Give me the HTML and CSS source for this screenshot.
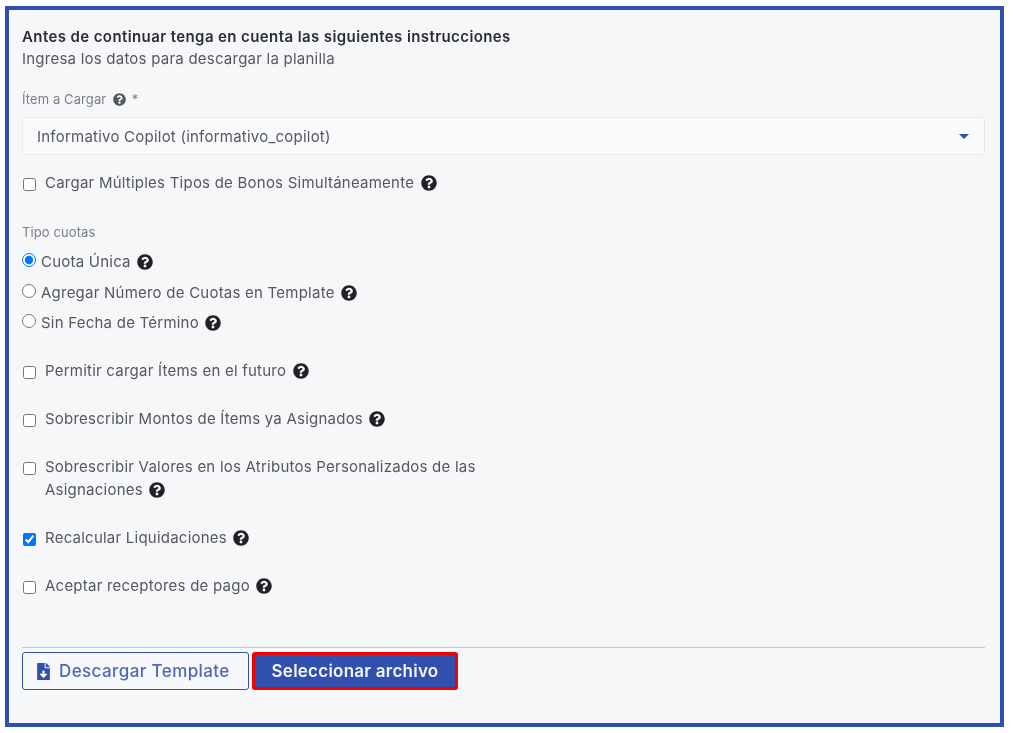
FILE: index.html
```
<!DOCTYPE html>
<html lang="es">
<head>
<meta charset="utf-8">
<title>Cargar ítems</title>
<link rel="stylesheet" href="styles.css">
</head>
<body>
<svg class="defs" width="0" height="0" aria-hidden="true">
  <symbol id="help" viewBox="0 0 512 512"><path d="M504 256c0 136.997-111.043 248-248 248S8 392.997 8 256C8 119.083 119.043 8 256 8s248 111.083 248 248zM262.655 90c-54.497 0-89.255 22.957-116.549 63.758-3.536 5.286-2.353 12.415 2.715 16.258l34.699 26.31c5.205 3.947 12.621 3.008 16.665-2.122 17.864-22.658 30.113-35.797 57.303-35.797 20.429 0 45.698 13.148 45.698 32.958 0 14.976-12.363 22.667-32.534 33.976C247.128 238.528 216 254.941 216 296v4c0 6.627 5.373 12 12 12h56c6.627 0 12-5.373 12-12v-1.333c0-28.462 83.186-29.647 83.186-106.667 0-58.002-60.165-105-116.531-105zM256 338c-25.365 0-46 20.635-46 46 0 25.364 20.635 46 46 46s46-20.636 46-46c0-25.365-20.635-46-46-46z"/></symbol>
  <symbol id="file-down" viewBox="0 0 384 512"><path d="M224 136V0H24C10.700 0 0 10.700 0 24v464c0 13.300 10.700 24 24 24h336c13.300 0 24-10.700 24-24V160H248c-13.200 0-24-10.800-24-24zm76.450 211.360l-96.420 95.700c-6.650 6.610-17.390 6.610-24.040 0l-96.420-95.700C73.420 337.290 80.540 320 94.820 320H160v-80c0-8.840 7.160-16 16-16h32c8.840 0 16 7.160 16 16v80h65.180c14.280 0 21.400 17.290 11.270 27.360zM377 105L279.100 7c-4.500-4.500-10.600-7-17-7H256v128h128v-6.100c0-6.300-2.500-12.400-7-16.900z"/></symbol>
</svg>
<main class="frame">
  <header class="intro">
    <h1 class="title">Antes de continuar tenga en cuenta las siguientes instrucciones</h1>
    <p class="subtitle">Ingresa los datos para descargar la planilla</p>
  </header>

  <label class="field-label item-label">Ítem a Cargar <svg class="help help-sm"><use href="#help"/></svg> *</label>
  <div class="select">
    <span>Informativo Copilot (informativo_copilot)</span>
    <span class="caret"></span>
  </div>

  <label class="check first-check"><input type="checkbox"><span>Cargar Múltiples Tipos de Bonos Simultáneamente <svg class="help"><use href="#help"/></svg></span></label>

  <div class="field-label quota-label">Tipo cuotas</div>
  <div class="radios">
    <label class="radio"><input type="radio" name="cuotas" checked><span>Cuota Única <svg class="help"><use href="#help"/></svg></span></label>
    <label class="radio"><input type="radio" name="cuotas"><span>Agregar Número de Cuotas en Template <svg class="help"><use href="#help"/></svg></span></label>
    <label class="radio"><input type="radio" name="cuotas"><span>Sin Fecha de Término <svg class="help"><use href="#help"/></svg></span></label>
  </div>

  <div class="checks">
    <label class="check"><input type="checkbox"><span>Permitir cargar Ítems en el futuro <svg class="help"><use href="#help"/></svg></span></label>
    <label class="check"><input type="checkbox"><span>Sobrescribir Montos de Ítems ya Asignados <svg class="help"><use href="#help"/></svg></span></label>
    <label class="check"><input type="checkbox"><span>Sobrescribir Valores en los Atributos Personalizados de las Asignaciones <svg class="help"><use href="#help"/></svg></span></label>
    <label class="check"><input type="checkbox" checked><span>Recalcular Liquidaciones <svg class="help"><use href="#help"/></svg></span></label>
    <label class="check"><input type="checkbox"><span>Aceptar receptores de pago <svg class="help"><use href="#help"/></svg></span></label>
  </div>

  <footer class="actions">
    <button class="btn btn-outline" type="button"><svg class="file-icon"><use href="#file-down"/></svg>Descargar Template</button>
    <button class="btn btn-primary" type="button">Seleccionar archivo</button>
  </footer>
</main>
</body>
</html>
```
FILE: styles.css
```
* { box-sizing: border-box; }
html, body { margin: 0; padding: 0; background: #fff; }
body { font-family: Inter, "Liberation Sans", sans-serif; color: #55585d; }
.defs { position: absolute; }
.frame {
  width: 999px;
  height: 721px;
  margin: 6px 0 0 5px;
  border: 4px solid #3150ad;
  background: #f6f7f9;
  padding: 17px 15px 0 13px;
  display: flex;
  flex-direction: column;
  filter: blur(.35px);
}
.title { margin: 0; font-size: 15px; line-height: 20px; font-weight: 600; letter-spacing: .4px; color: #2b2e33; }
.subtitle { margin: 2px 0 0; font-size: 15px; line-height: 20px; letter-spacing: .23px; }
.field-label { font-size: 13px; line-height: 16px; letter-spacing: .1px; color: #7b7f84; display: block; }
.item-label { margin-top: 22px; }
.help { width: 16px; height: 16px; fill: #202226; vertical-align: -3px; margin-left: 2px; }
.help-sm { width: 13px; height: 13px; fill: #55585d; vertical-align: -2px; margin-left: 3px; margin-right: 2px; }
.select {
  margin-top: 10px;
  height: 38px;
  display: flex;
  align-items: center;
  justify-content: space-between;
  padding: 0 15px 0 14px;
  background: #f9fafc;
  border: 1px solid #e7e9ed;
  border-radius: 4px;
  font-size: 15px;
  letter-spacing: .23px;
}
.caret { width: 0; height: 0; border: 5px solid transparent; border-top-color: #3150ad; border-bottom: 0; }
.check { display: flex; align-items: flex-start; font-size: 15px; line-height: 23px; letter-spacing: .23px; }
.check input { width: 13px; height: 13px; margin: 7px 9px 0 1px; flex: none; }
.check span { max-width: 440px; }
.first-check { margin-top: 16px; }
.first-check span { max-width: none; }
.quota-label { margin-top: 30px; }
.radios { margin-top: 10px; display: flex; flex-direction: column; gap: 7.500px; }
.radio { display: flex; align-items: flex-start; font-size: 15px; line-height: 23px; letter-spacing: .23px; }
.radio input { width: 14px; height: 14px; margin: 3px 5px 0 0; flex: none; }
.checks { margin-top: 25px; display: flex; flex-direction: column; gap: 25px; }
.actions {
  margin-top: auto;
  margin-bottom: 33px;
  border-top: 1px solid #c5cad1;
  padding-top: 4px;
  display: flex;
  gap: 3px;
}
.btn { height: 38px; font-family: inherit; font-size: 17px; border-radius: 3px; padding: 0; display: flex; align-items: center; justify-content: center; }
.btn-outline { width: 227px; justify-content: flex-start; padding-left: 14px; background: #f7f8fb; color: #4e69b8; border: 1px solid #3150ad; font-weight: 500; letter-spacing: .4px; }
.file-icon { width: 13px; height: 17px; fill: #3150ad; margin-right: 9px; }
.btn-primary { width: 206px; background: #3150ad; color: #f3f5fa; border: 3px solid #f00000; font-weight: 600; letter-spacing: .24px; }
```
